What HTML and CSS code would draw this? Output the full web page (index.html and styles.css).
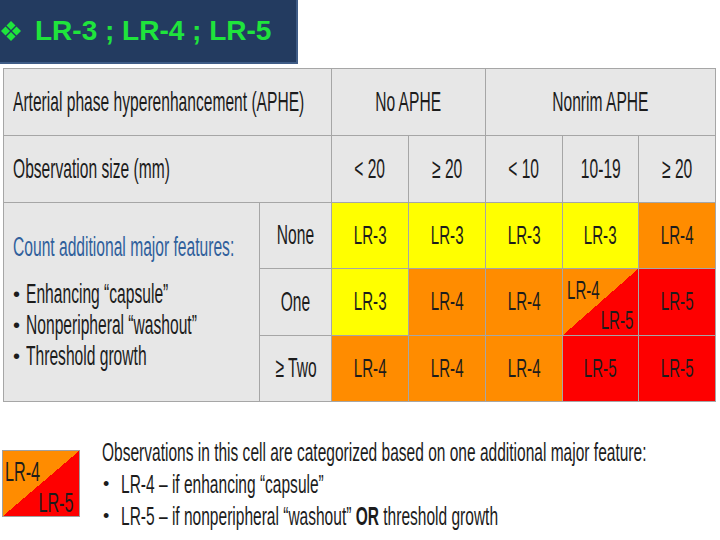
FILE: index.html
```html
<!DOCTYPE html>
<html lang="en">
<head>
<meta charset="utf-8">
<title>LI-RADS LR-3 ; LR-4 ; LR-5</title>
<link rel="stylesheet" href="styles.css">
</head>
<body>
<header class="title">
  <svg class="dia" viewBox="0 0 20 20" aria-hidden="true">
    <path d="M10 0 L14.5 4.5 L10 9 L5.5 4.5 Z"/>
    <path d="M4.5 5.5 L9 10 L4.5 14.5 L0 10 Z"/>
    <path d="M15.5 5.5 L20 10 L15.5 14.5 L11 10 Z"/>
    <path d="M10 11 L14.5 15.5 L10 20 L5.5 15.5 Z"/>
  </svg>
  <span class="title-text">LR-3 ; LR-4 ; LR-5</span>
</header>

<div class="grid">
  <div class="cell left span-l"><span class="sq">Arterial phase hyperenhancement (APHE)</span></div>
  <div class="cell span-no"><span class="sq">No APHE</span></div>
  <div class="cell span-nonrim"><span class="sq">Nonrim APHE</span></div>

  <div class="cell left span-l"><span class="sq">Observation size (mm)</span></div>
  <div class="cell"><span class="sq">&lt; 20</span></div>
  <div class="cell"><span class="sq">≥ 20</span></div>
  <div class="cell"><span class="sq">&lt; 10</span></div>
  <div class="cell"><span class="sq">10-19</span></div>
  <div class="cell"><span class="sq">≥ 20</span></div>

  <div class="cell features">
    <div class="count"><span class="sq">Count additional major features:</span></div>
    <div class="feat"><span class="dot">•</span><span class="sq">Enhancing “capsule”</span></div>
    <div class="feat"><span class="dot">•</span><span class="sq">Nonperipheral “washout”</span></div>
    <div class="feat"><span class="dot">•</span><span class="sq">Threshold growth</span></div>
  </div>

  <div class="cell"><span class="sq">None</span></div>
  <div class="cell d y"><span class="sq">LR-3</span></div>
  <div class="cell d y"><span class="sq">LR-3</span></div>
  <div class="cell d y"><span class="sq">LR-3</span></div>
  <div class="cell d y"><span class="sq">LR-3</span></div>
  <div class="cell d o"><span class="sq">LR-4</span></div>

  <div class="cell"><span class="sq">One</span></div>
  <div class="cell d y"><span class="sq">LR-3</span></div>
  <div class="cell d o"><span class="sq">LR-4</span></div>
  <div class="cell d o"><span class="sq">LR-4</span></div>
  <div class="cell d split"><span class="sq a">LR-4</span><span class="sq b">LR-5</span></div>
  <div class="cell d r"><span class="sq">LR-5</span></div>

  <div class="cell"><span class="sq">≥ Two</span></div>
  <div class="cell d o"><span class="sq">LR-4</span></div>
  <div class="cell d o"><span class="sq">LR-4</span></div>
  <div class="cell d o"><span class="sq">LR-4</span></div>
  <div class="cell d r"><span class="sq">LR-5</span></div>
  <div class="cell d r"><span class="sq">LR-5</span></div>
</div>

<section class="legend">
  <div class="split legend-box"><span class="sq a">LR-4</span><span class="sq b">LR-5</span></div>
  <div class="legend-text">
    <p class="line"><span class="sq">Observations in this cell are categorized based on one additional major feature:</span></p>
    <p class="line li"><span class="dot">•</span><span class="sq">LR-4 – if enhancing “capsule”</span></p>
    <p class="line li"><span class="dot">•</span><span class="sq">LR-5 – if nonperipheral “washout” <b>OR</b> threshold growth</span></p>
  </div>
</section>
</body>
</html>
```

FILE: styles.css
```css
* {
  box-sizing: border-box;
  margin: 0;
  padding: 0;
}

html, body {
  width: 720px;
  height: 540px;
  overflow: hidden;
}

body {
  background: #ffffff;
  font-family: "Liberation Sans", Arial, sans-serif;
  color: #1c1c1c;
}

/* title bar */
.title {
  width: 298px;
  height: 64px;
  background: #233b60;
  border-right: 2px solid #3f5c86;
  border-bottom: 2px solid #3f5c86;
  display: flex;
  align-items: center;
  gap: 14px;
  padding-left: 1px;
  color: #1fe43c;
  font-weight: bold;
  font-size: 28px;
}

.dia {
  width: 20px;
  height: 20px;
  flex: none;
  fill: #1fe43c;
}

/* condensed look of the source text */
.sq {
  display: inline-block;
  transform: scaleX(0.6);
  white-space: nowrap;
  flex: none;
}

.dot {
  flex: none;
}

/* table */
.grid {
  margin: 4px 0 0 3px;
  display: grid;
  grid-template-columns: 255px 71px 76px 76px 76px 75px 76px;
  grid-template-rows: 66px 66px 65px 66px 65px;
  gap: 1px;
  padding: 1px;
  background: #a6a6a6;
  width: max-content;
}

.cell {
  background: #e7e7e7;
  display: flex;
  align-items: center;
  justify-content: center;
  font-size: 28px;
  line-height: 1.15;
  white-space: nowrap;
}

.cell .sq {
  transform: scaleX(0.557);
}

.left {
  justify-content: flex-start;
  padding-left: 9px;
}

.left .sq,
.features .sq {
  transform-origin: left center;
}

.span-l { grid-column: 1 / 3; }
.span-no { grid-column: 3 / 5; }
.span-nonrim { grid-column: 5 / 8; }

.features {
  grid-column: 1;
  grid-row: 3 / 6;
  flex-direction: column;
  align-items: flex-start;
  justify-content: center;
  padding-left: 9px;
  font-size: 27px;
}

.features .sq {
  transform: scaleX(0.578);
}

.count {
  color: #30609c;
  line-height: 31px;
  margin-bottom: 16px;
}

.feat {
  display: flex;
  align-items: center;
  line-height: 31px;
}

.feat .dot {
  width: 13px;
  font-size: 20px;
}

.d { font-size: 26px; }
.d .sq { transform: scaleX(0.58); }
.y { background: #ffff00; }
.o { background: #ff8c00; }
.r { background: #fe0000; }

.split {
  background: linear-gradient(to bottom right, #ff8c00 50%, #fe0000 50%);
  flex-direction: column;
  justify-content: space-between;
  align-items: stretch;
  padding: 7px 5px 3px 4px;
}

.split .a {
  align-self: flex-start;
  transform-origin: left center;
}

.split .b {
  align-self: flex-end;
  transform-origin: right center;
}

/* legend */
.legend {
  display: flex;
  align-items: flex-start;
  gap: 22px;
  margin-top: 34px;
  padding-left: 2px;
}

.legend-box {
  display: flex;
  width: 78px;
  height: 67px;
  margin-top: 14px;
  border: 1px solid #a0a0a0;
  font-size: 27px;
  line-height: 1.15;
  padding: 6px 5px 2px 2px;
  flex: none;
}

.legend-text {
  font-size: 26px;
  line-height: 32px;
  overflow: hidden;
  width: 616px;
}

.line .sq {
  transform: scaleX(0.597);
  transform-origin: left center;
}

.li {
  display: flex;
  align-items: center;
  padding-left: 1px;
}

.li .dot {
  width: 18px;
  font-size: 18px;
}

.legend-text b {
  font-weight: bold;
}
```
